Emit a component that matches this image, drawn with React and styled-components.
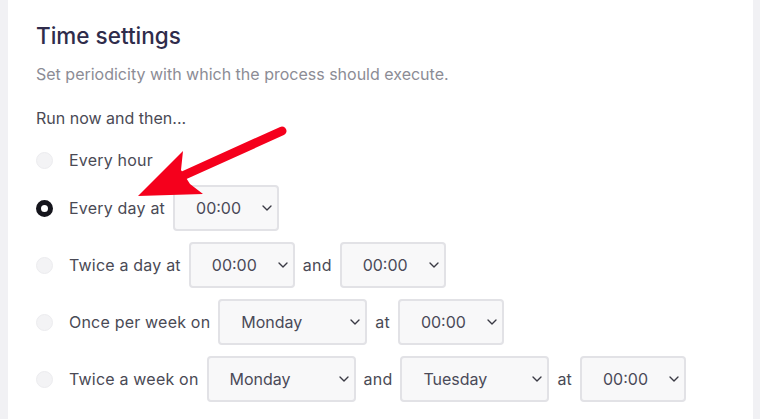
import styled, { createGlobalStyle } from "styled-components";
import { ChevronDown } from "lucide-react";

const GlobalStyle = createGlobalStyle`
  html, body {
    margin: 0;
    padding: 0;
    background-color: #f1f1f4;
  }
  body {
    font-family: Inter, "Noto Sans", sans-serif;
  }
`;

const SPage = styled.div`
  display: flex;
  height: 419px;
  padding: 0 7px 0 8px;
`;

const SCard = styled.div`
  position: relative;
  flex: 1;
  background-color: #ffffff;
  padding: 21px 28px 0 28px;
`;

const STitle = styled.h2`
  margin: 0;
  font-size: 22.5px;
  line-height: 30px;
  font-weight: 500;
  color: #2f2c4b;
`;

const SDescription = styled.p`
  margin: 13px 0 0 0;
  font-size: 16px;
  line-height: 20px;
  color: #8c8c95;
`;

const SLead = styled.p`
  margin: 24px 0 0 0;
  font-size: 16px;
  line-height: 20px;
  color: #4a4a55;
`;

const SOptions = styled.div`
  display: flex;
  flex-direction: column;
  gap: 11px;
  margin-top: 18px;
`;

const SRow = styled.label`
  display: flex;
  align-items: center;
  gap: 8px;
  min-height: 28px;
  font-size: 16px;
  letter-spacing: 0.2px;
  color: #4a4a55;
`;

const SRadio = styled.span`
  box-sizing: border-box;
  width: 17px;
  height: 17px;
  margin-right: 8px;
  border-radius: 50%;
  flex-shrink: 0;
  background-color: ${(p) => (p.checked ? "#ffffff" : "#f3f3f5")};
  border: ${(p) => (p.checked ? "5px solid #15151c" : "1px solid #ececef")};
`;

const SSelectWrap = styled.span`
  position: relative;
  display: inline-flex;
  width: ${(p) => p.width}px;
  height: 46px;
`;

const SSelect = styled.select`
  appearance: none;
  width: 100%;
  height: 100%;
  box-sizing: border-box;
  padding: 0 0 0 21px;
  border: 2px solid #e2e2e6;
  border-radius: 4px;
  background-color: #f8f8f9;
  font-family: Inter, "Noto Sans", sans-serif;
  font-size: 16px;
  color: #4a4a58;
  outline: none;
`;

const SChevron = styled(ChevronDown)`
  position: absolute;
  right: 4px;
  top: 15px;
  width: 16px;
  height: 16px;
  color: #3a3a44;
  pointer-events: none;
`;

const SArrow = styled.svg`
  position: absolute;
  left: 0;
  top: 0;
  pointer-events: none;
`;

const DAYS = ["Monday", "Tuesday", "Wednesday", "Thursday", "Friday", "Saturday", "Sunday"];
const TIMES = ["00:00", "01:00", "02:00", "03:00", "06:00", "12:00", "18:00"];

const Dropdown = ({ value, options, width }) => (
  <SSelectWrap width={width}>
    <SSelect defaultValue={value}>
      {options.map((o) => (
        <option key={o}>{o}</option>
      ))}
    </SSelect>
    <SChevron strokeWidth={2} />
  </SSelectWrap>
);

const Time = () => <Dropdown value="00:00" options={TIMES} width={106} />;
const Day = ({ value }) => <Dropdown value={value} options={DAYS} width={149} />;

const App = () => {
  return (
    <>
      <GlobalStyle />
      <SPage>
        <SCard>
          <STitle>Time settings</STitle>
          <SDescription>Set periodicity with which the process should execute.</SDescription>
          <SLead>Run now and then...</SLead>
          <SOptions>
            <SRow>
              <SRadio />
              Every hour
            </SRow>
            <SRow>
              <SRadio checked />
              Every day at
              <Time />
            </SRow>
            <SRow>
              <SRadio />
              Twice a day at
              <Time />
              and
              <Time />
            </SRow>
            <SRow>
              <SRadio />
              Once per week on
              <Day value="Monday" />
              at
              <Time />
            </SRow>
            <SRow>
              <SRadio />
              Twice a week on
              <Day value="Monday" />
              and
              <Day value="Tuesday" />
              at
              <Time />
            </SRow>
          </SOptions>
          {/* annotation arrow, coordinates relative to the card */}
          <SArrow width="745" height="419" viewBox="0 0 745 419">
            <line x1="274" y1="131" x2="170" y2="178" stroke="#f5001c" strokeWidth="9" strokeLinecap="round" />
            <polygon points="130,196 175,151 173,170 182,184 195,194" fill="#f5001c" />
          </SArrow>
        </SCard>
      </SPage>
    </>
  );
};

export default App;
